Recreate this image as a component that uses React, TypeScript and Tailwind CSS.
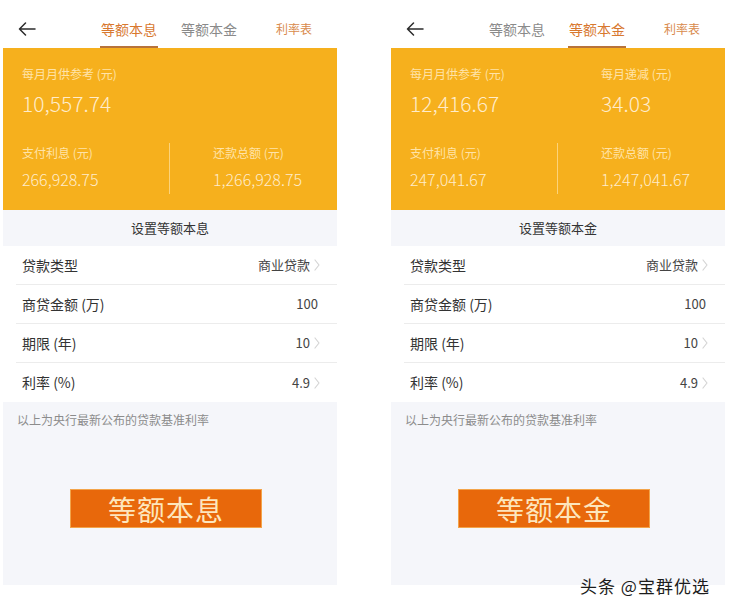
import React from "react";

type Row = { label: string; value: string; chevron: boolean };

interface PhoneProps {
  active: 0 | 1;
  topLeft: { label: string; value: string };
  topRight?: { label: string; value: string };
  interest: string;
  total: string;
  setTitle: string;
  button: string;
}

const rows: Row[] = [
  { label: "贷款类型", value: "商业贷款", chevron: true },
  { label: "商贷金额 (万)", value: "100", chevron: false },
  { label: "期限 (年)", value: "10", chevron: true },
  { label: "利率 (%)", value: "4.9", chevron: true },
];

function BackArrow() {
  return (
    <svg width="18" height="14" viewBox="0 0 18 14" fill="none">
      <path d="M17 7H1.5M7.5 1L1.5 7l6 6" stroke="#2b2b2b" strokeWidth="1.5" strokeLinecap="round" strokeLinejoin="round" />
    </svg>
  );
}

function Chevron() {
  return (
    <svg width="6" height="12" viewBox="0 0 6 12" fill="none" className="ml-[4px]">
      <path d="M1 1l4 5-4 5" stroke="#d4d4d4" strokeWidth="1.2" strokeLinecap="round" strokeLinejoin="round" />
    </svg>
  );
}

function Phone({ active, topLeft, topRight, interest, total, setTitle, button }: PhoneProps) {
  const tabs = ["等额本息", "等额本金"];
  return (
    <div className="flex w-[334px] flex-col">
      {/* header */}
      <div className="flex h-[48px] bg-white">
        <div className="w-[97px] pl-[15px] pt-[22px]">
          <BackArrow />
        </div>
        {tabs.map((t, i) => (
          <div key={t} className="flex w-[80px] flex-col">
            <div
              className={`mt-[20px] h-[18px] w-[58px] text-center text-[14px] leading-[18px] ${
                i === active ? "text-[#d8782f]" : "text-[#8a8a8a]"
              }`}
            >
              {t}
            </div>
            {i === active && <div className="mt-[8px] h-[2px] w-[58px] bg-[#b8733a]" />}
          </div>
        ))}
        <div className="pl-[16px] pt-[21px] text-[12px] leading-[16px] text-[#d98a4c]">利率表</div>
      </div>

      {/* orange summary */}
      <div className="h-[162px] bg-[#f6b01d] px-[19px] pt-[18px] text-[#ffe3a8]">
        <div className="flex">
          <div className="w-[147px]">
            <div className="text-[12px] leading-[16px]">{topLeft.label}</div>
            <div className="mt-[8px] text-[21px] font-light leading-[26px] text-[#ffeccb]">{topLeft.value}</div>
          </div>
          {topRight && (
            <div className="pl-[44px]">
              <div className="text-[12px] leading-[16px]">{topRight.label}</div>
              <div className="mt-[8px] text-[21px] font-light leading-[26px] text-[#ffeccb]">{topRight.value}</div>
            </div>
          )}
        </div>
        <div className="mt-[27px] flex h-[51px]">
          <div className="w-[147px] pt-[2px]">
            <div className="text-[12px] leading-[16px]">支付利息 (元)</div>
            <div className="mt-[7px] text-[16px] font-light leading-[22px] text-[#ffeccb]">{interest}</div>
          </div>
          <div className="w-px bg-[#fcd37a]" />
          <div className="pl-[43px] pt-[2px]">
            <div className="text-[12px] leading-[16px]">还款总额 (元)</div>
            <div className="mt-[7px] text-[16px] font-light leading-[22px] text-[#ffeccb]">{total}</div>
          </div>
        </div>
      </div>

      {/* settings */}
      <div className="flex flex-col bg-[#f5f6fa]">
        <div className="h-[36px] text-center text-[13px] leading-[36px] text-[#333]">{setTitle}</div>
        <div className="bg-white">
          {rows.map((r, i) => (
            <div key={r.label} className="pl-[13px]">
              <div
                className={`flex h-[39px] items-center justify-between pl-[6px] pr-[17px] ${
                  i < rows.length - 1 ? "border-b border-[#ececec]" : ""
                }`}
              >
                <span className="text-[14px] text-[#333]">{r.label}</span>
                <span className="flex items-center text-[13px] text-[#444]">
                  <span className={r.chevron ? "" : "mr-[2px]"}>{r.value}</span>
                  {r.chevron && <Chevron />}
                </span>
              </div>
            </div>
          ))}
        </div>
        <div className="mt-[10px] pl-[14px] text-[12px] leading-[16px] text-[#8c8c8c]">
          以上为央行最新公布的贷款基准利率
        </div>
        <div className="ml-[67px] mt-[61px] flex h-[39px] w-[192px] items-center justify-center border border-[#f3a44a] bg-[#e8680b] text-[28px] tracking-[1px] text-[#fde6bd]">
          {button}
        </div>
        <div className="h-[57px]" />
      </div>
    </div>
  );
}

export default function App() {
  return (
    <div className="relative flex h-[608px] w-[731px] items-start gap-[54px] overflow-hidden bg-white pl-[3px] font-['Noto_Sans_CJK_SC','Noto_Sans',sans-serif]">
      <Phone
        active={0}
        topLeft={{ label: "每月月供参考 (元)", value: "10,557.74" }}
        interest="266,928.75"
        total="1,266,928.75"
        setTitle="设置等额本息"
        button="等额本息"
      />
      <Phone
        active={1}
        topLeft={{ label: "每月月供参考 (元)", value: "12,416.67" }}
        topRight={{ label: "每月递减 (元)", value: "34.03" }}
        interest="247,041.67"
        total="1,247,041.67"
        setTitle="设置等额本金"
        button="等额本金"
      />
      <div className="absolute left-[580px] top-[574px] text-[17px] leading-[24px] tracking-[1px] text-[#1c1c1c]">
        头条 @宝群优选
      </div>
    </div>
  );
}
